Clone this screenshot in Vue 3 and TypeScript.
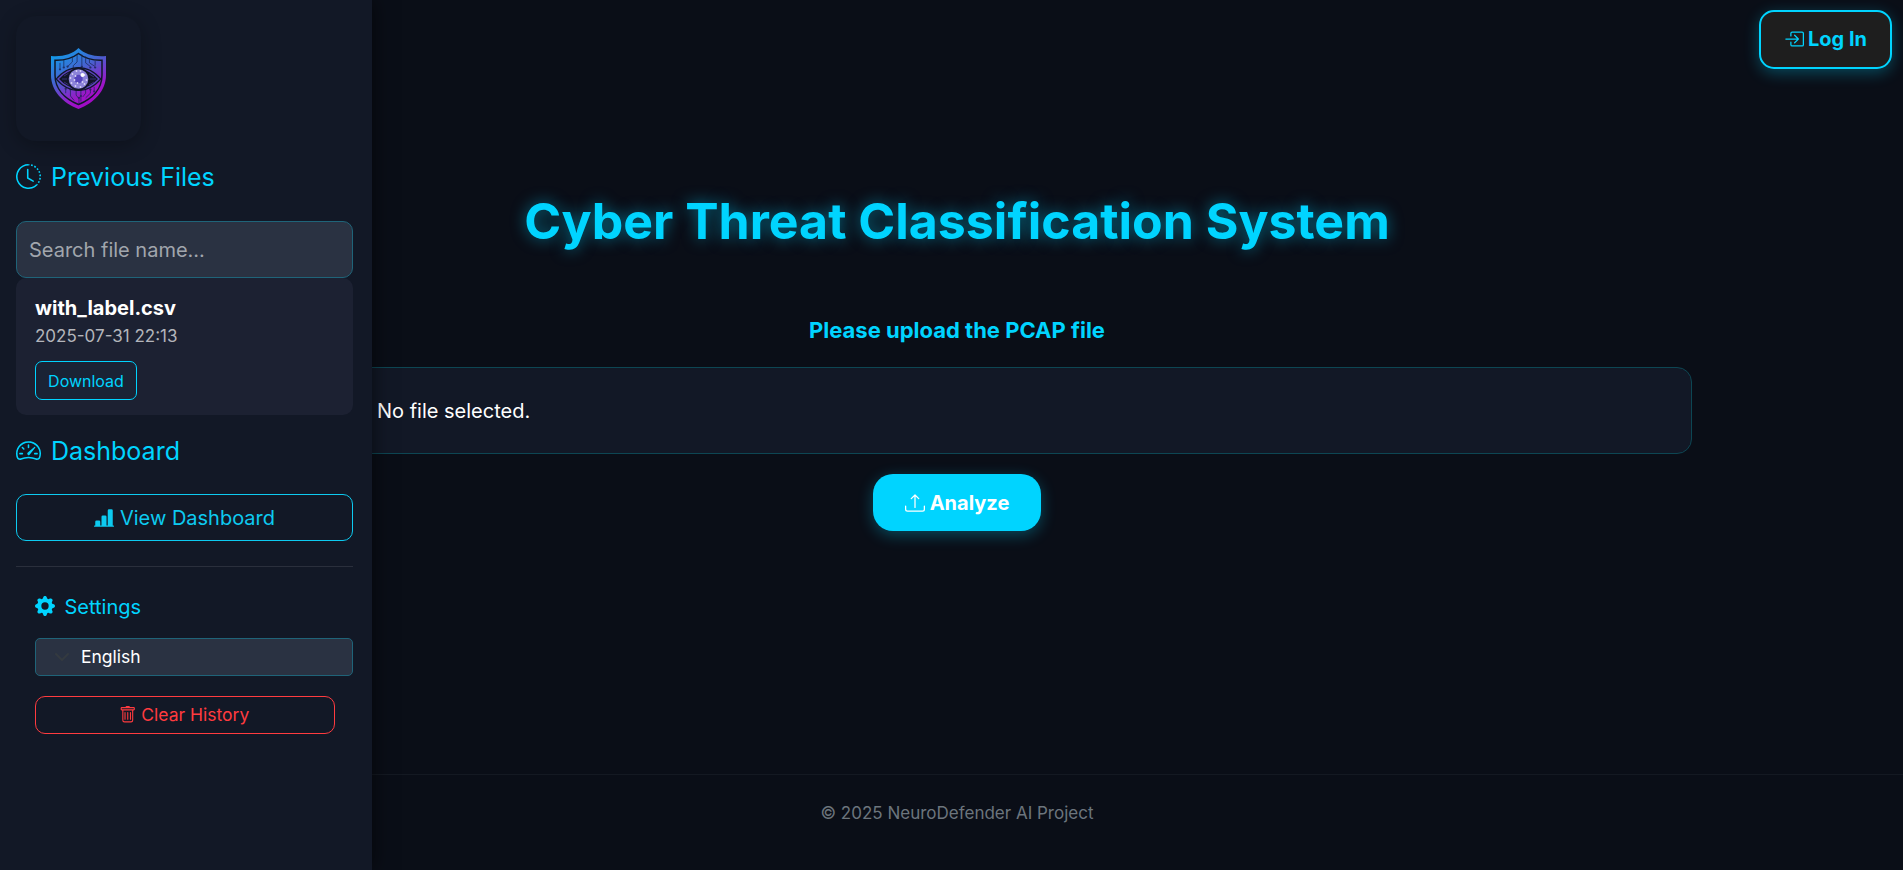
<script setup lang="ts">
import { ref } from 'vue'

interface StoredFile {
  name: string
  date: string
}

const search = ref('')
const files = ref<StoredFile[]>([{ name: 'with_label.csv', date: '2025-07-31 22:13' }])

const traces: string[] = [
  'M28 4v9l-4 4v5', 'M33 5v12', 'M23 7v6l-5 5', 'M37 7v7l5 4', 'M41 10v4l6 4', 'M14 11v8', 'M10 14v6', 'M47 12v5',
  'M21 44v6l4 5', 'M27 43v6l3 4v6', 'M32 43v13', 'M37 43v4l-3 4', 'M42 42v5l-5 5', 'M46 40v4', 'M16 41v6',
]
const nodes: number[][] = [
  [24, 22], [33, 18], [18, 18], [42, 19], [47, 19], [14, 19], [10, 21], [21, 43], [30, 52], [32, 50], [42, 43], [16, 42], [46, 45],
]
const sparkles: number[][] = [
  [24, 27], [28, 24], [32, 24], [36, 28], [38, 33], [36, 37], [32, 40], [27, 39], [23, 36], [22, 31], [27, 29], [34, 35], [29, 36], [26, 33],
]
</script>

<template>
  <div class="page">
    <aside class="sidebar">
      <div class="logo">
        <svg width="57" height="63" viewBox="0 0 57 63">
          <defs>
            <linearGradient id="shield" x1="0.1" y1="0" x2="0.65" y2="1">
              <stop offset="0" stop-color="#08a5ed" />
              <stop offset="0.45" stop-color="#4860cf" />
              <stop offset="0.8" stop-color="#9c16c8" />
              <stop offset="1" stop-color="#a306c4" />
            </linearGradient>
          </defs>
          <path fill="url(#shield)" d="M28.5 1C22 7.500 12 10 1 9v19c0 16 12 28 27.500 34C44 56 56 44 56 28V9C45 10 35 7.500 28.500 1Z" />
          <path fill="none" stroke="#101827" stroke-width="1.500" d="M28.5 6.500C22 11.500 14 13.500 5 13.200V28c0 14 10 24 23.500 29.500C42 52 52 42 52 28V13.200C43 13.500 35 11.500 28.500 6.500Z" />
          <g class="trace" transform="translate(0.5 3) scale(0.95 0.92)">
            <path v-for="d in traces" :key="d" :d="d" />
            <circle v-for="(n, i) in nodes" :key="i" :cx="n[0]" :cy="n[1]" r="1.200" />
          </g>
          <path fill="#111528" d="M5.500 32C18 16 39 16 51.500 32 39 48 18 48 5.500 32Z" />
          <path fill="none" stroke="#5a45be" stroke-width="1.400" d="M8 32C20 18.500 37 18.500 49 32 37 45.500 20 45.500 8 32Z" />
          <path fill="none" stroke="#353072" stroke-width="1" d="M12 32h8M14 29l5-3M14 35l5 3M38 32h8M39 27l5 3M39 38l5-3" />
          <circle cx="28.500" cy="32" r="11.500" fill="#111528" />
          <circle cx="28.500" cy="32" r="9.800" fill="#8c83d9" />
          <circle cx="28.500" cy="32" r="4.200" fill="#5544bd" />
          <g fill="#d9d3f5">
            <circle v-for="(s, i) in sparkles" :key="i" :cx="s[0] - 1.500" :cy="s[1]" r="0.900" />
          </g>
          <circle cx="32.500" cy="28" r="2" fill="#fff" />
        </svg>
      </div>

      <h5 class="heading">
        <svg class="icon" viewBox="0 0 16 16">
          <path d="M8.515 1.019A7 7 0 0 0 8 1V0a8 8 0 0 1 .589.022zm2.004.45a7 7 0 0 0-.985-.299l.219-.976q.576.129 1.126.342zm1.370.710a7 7 0 0 0-.439-.270l.493-.870a8 8 0 0 1 .979.654l-.615.789a7 7 0 0 0-.418-.302zm1.834 1.790a7 7 0 0 0-.653-.796l.724-.690q.406.429.747.910zm.744 1.352a7 7 0 0 0-.214-.468l.893-.450a8 8 0 0 1 .450 1.088l-.950.313a7 7 0 0 0-.179-.483m.530 2.507a7 7 0 0 0-.100-1.025l.985-.170q.100.580.116 1.170zm-.131 1.538q.050-.254.081-.510l.993.123a8 8 0 0 1-.230 1.155l-.964-.267q.069-.247.120-.501m-.952 2.379q.276-.436.486-.908l.914.405q-.240.540-.555 1.038zm-.964 1.205q.183-.183.350-.378l.758.653a8 8 0 0 1-.401.432z" />
          <path d="M8 1a7 7 0 1 0 4.950 11.950l.707.707A8.001 8.001 0 1 1 8 0z" />
          <path d="M7.500 3a.5.5 0 0 1 .5.5v5.210l3.248 1.856a.5.5 0 0 1-.496.868l-3.500-2A.5.5 0 0 1 7 9V3.500a.5.5 0 0 1 .5-.5" />
        </svg>
        <span>Previous Files</span>
      </h5>

      <input v-model="search" class="search" type="text" placeholder="Search file name..." />

      <div v-for="file in files" :key="file.name" class="file">
        <strong class="file-name">{{ file.name }}</strong>
        <span class="file-date">{{ file.date }}</span>
        <button class="download">Download</button>
      </div>

      <h5 class="heading dash-heading">
        <svg class="icon" viewBox="0 0 16 16">
          <path d="M8 4a.5.5 0 0 1 .5.5V6a.5.5 0 0 1-1 0V4.500A.5.5 0 0 1 8 4M3.732 5.732a.5.5 0 0 1 .707 0l.915.914a.5.5 0 1 1-.708.708l-.914-.915a.5.5 0 0 1 0-.707M2 10a.5.5 0 0 1 .5-.5h1.586a.5.5 0 0 1 0 1H2.500A.5.5 0 0 1 2 10m9.500 0a.5.5 0 0 1 .5-.5h1.500a.5.5 0 0 1 0 1H12a.5.5 0 0 1-.5-.5m.754-4.246a.39.39 0 0 0-.527-.020L7.547 9.310a.91.91 0 1 0 1.302 1.258l3.434-4.297a.39.39 0 0 0-.029-.518z" />
          <path fill-rule="evenodd" d="M0 10a8 8 0 1 1 15.547 2.661c-.442 1.253-1.845 1.602-2.932 1.250C11.309 13.488 9.475 13 8 13c-1.474 0-3.310.488-4.615.911-1.087.352-2.490.003-2.932-1.250A8 8 0 0 1 0 10m8-7a7 7 0 0 0-6.603 9.329c.203.575.923.876 1.680.630C4.397 12.533 6.358 12 8 12s3.604.532 4.923.960c.757.245 1.477-.056 1.680-.631A7 7 0 0 0 8 3" />
        </svg>
        <span>Dashboard</span>
      </h5>

      <button class="view">
        <svg class="icon" viewBox="0 0 16 16">
          <path d="M11 2a1 1 0 0 1 1-1h2a1 1 0 0 1 1 1v12h.5a.5.5 0 0 1 0 1H.5a.5.5 0 0 1 0-1H1v-3a1 1 0 0 1 1-1h2a1 1 0 0 1 1 1v3h1V7a1 1 0 0 1 1-1h2a1 1 0 0 1 1 1v7h1z" />
        </svg>
        <span>View Dashboard</span>
      </button>

      <div class="divider"></div>

      <section class="settings">
        <h6 class="settings-title">
          <svg class="icon" viewBox="0 0 16 16">
            <path d="M9.405 1.050c-.413-1.400-2.397-1.400-2.810 0l-.100.340a1.464 1.464 0 0 1-2.105.872l-.310-.170c-1.283-.698-2.686.705-1.987 1.987l.169.311c.446.820.023 1.841-.872 2.105l-.340.100c-1.400.413-1.400 2.397 0 2.810l.340.100a1.464 1.464 0 0 1 .872 2.105l-.170.310c-.698 1.283.705 2.686 1.987 1.987l.311-.169a1.464 1.464 0 0 1 2.105.872l.100.340c.413 1.400 2.397 1.400 2.810 0l.100-.340a1.464 1.464 0 0 1 2.105-.872l.310.170c1.283.698 2.686-.705 1.987-1.987l-.169-.311a1.464 1.464 0 0 1 .872-2.105l.340-.100c1.400-.413 1.400-2.397 0-2.810l-.340-.100a1.464 1.464 0 0 1-.872-2.105l.170-.310c.698-1.283-.705-2.686-1.987-1.987l-.311.169a1.464 1.464 0 0 1-2.105-.872zM8 10.930a2.929 2.929 0 1 1 0-5.860 2.929 2.929 0 0 1 0 5.858z" />
          </svg>
          <span>Settings</span>
        </h6>
        <div class="language">
          <svg class="chevron" viewBox="0 0 16 16"><path d="m2 5 6 6 6-6" /></svg>
          <span>English</span>
        </div>
        <button class="clear">
          <svg class="icon" viewBox="0 0 16 16">
            <path d="M5.500 5.500A.5.5 0 0 1 6 6v6a.5.5 0 0 1-1 0V6a.5.5 0 0 1 .5-.5m2.500 0a.5.5 0 0 1 .5.5v6a.5.5 0 0 1-1 0V6a.5.5 0 0 1 .5-.5m3 .5a.5.5 0 0 0-1 0v6a.5.5 0 0 0 1 0z" />
            <path d="M14.500 3a1 1 0 0 1-1 1H13v9a2 2 0 0 1-2 2H5a2 2 0 0 1-2-2V4h-.5a1 1 0 0 1-1-1V2a1 1 0 0 1 1-1H6a1 1 0 0 1 1-1h2a1 1 0 0 1 1 1h3.500a1 1 0 0 1 1 1zM4.118 4 4 4.059V13a1 1 0 0 0 1 1h6a1 1 0 0 0 1-1V4.059L11.882 4zM2.500 3h11V2h-11z" />
          </svg>
          <span>Clear History</span>
        </button>
      </section>
    </aside>

    <header class="topbar">
      <button class="login">
        <svg class="icon" viewBox="0 0 16 16">
          <path d="M6 3.500a.5.5 0 0 1 .5-.5h8a.5.5 0 0 1 .5.5v9a.5.5 0 0 1-.5.5h-8a.5.5 0 0 1-.5-.5v-2a.5.5 0 0 0-1 0v2A1.500 1.500 0 0 0 6.500 14h8a1.500 1.500 0 0 0 1.500-1.500v-9A1.500 1.500 0 0 0 14.500 2h-8A1.500 1.500 0 0 0 5 3.500v2a.5.5 0 0 0 1 0z" />
          <path d="M11.854 8.354a.5.5 0 0 0 0-.708l-3-3a.5.5 0 1 0-.708.708L10.293 7.500H1.500a.5.5 0 0 0 0 1h8.793l-2.147 2.146a.5.5 0 0 0 .708.708z" />
        </svg>
        <span>Log In</span>
      </button>
    </header>

    <main class="main">
      <h1 class="title">Cyber Threat Classification System</h1>
      <label class="prompt">Please upload the PCAP file</label>
      <div class="picker">No file selected.</div>
      <button class="analyze">
        <svg class="icon" viewBox="0 0 16 16">
          <path d="M.5 9.900a.5.5 0 0 1 .5.5v2.500a1 1 0 0 0 1 1h12a1 1 0 0 0 1-1v-2.500a.5.5 0 0 1 1 0v2.500a2 2 0 0 1-2 2H2a2 2 0 0 1-2-2v-2.500a.5.5 0 0 1 .5-.5" />
          <path d="M7.646 1.146a.5.5 0 0 1 .708 0l3 3a.5.5 0 0 1-.708.708L8.500 2.707V11.500a.5.5 0 0 1-1 0V2.707L5.354 4.854a.5.5 0 1 1-.708-.708z" />
        </svg>
        <span>Analyze</span>
      </button>
    </main>

    <footer class="footer">© 2025 NeuroDefender AI Project</footer>
  </div>
</template>

<style>
body {
  background: #0a0e17;
  overflow: hidden;
}
</style>

<style scoped>
.page,
.page * {
  box-sizing: border-box;
}

.page {
  height: 870px;
  display: flex;
  flex-direction: column;
  background: #0a0e17;
  color: #fff;
  font-family: Inter, 'Liberation Sans', sans-serif;
  font-size: 20px;
  line-height: 30px;
}

button,
input {
  font: inherit;
  margin: 0;
}

.icon {
  width: 1em;
  height: 1em;
  flex: none;
  fill: currentColor;
}

.sidebar {
  position: absolute;
  z-index: 2;
  left: 0;
  top: 0;
  width: 372px;
  height: 870px;
  padding: 16px 19px 16px 16px;
  background: #121826;
  box-shadow: 0 0 20px rgba(0, 0, 0, 0.6);
  display: flex;
  flex-direction: column;
}

.logo {
  width: 125px;
  height: 125px;
  flex: none;
  display: flex;
  align-items: center;
  justify-content: center;
  border-radius: 20px;
  box-shadow: 0 4px 20px rgba(0, 0, 0, 0.3);
}

.trace {
  fill: #17234f;
  opacity: 0.8;
}

.trace path {
  fill: none;
  stroke: #17234f;
  stroke-width: 0.9;
}

.heading {
  display: flex;
  align-items: center;
  gap: 10px;
  margin: 21px 0 0;
  height: 30px;
  font-size: 25px;
  font-weight: 400;
  color: #00d4ff;
}

.heading .icon,
.settings-title .icon {
  margin-bottom: 2px;
}

.search {
  width: 337px;
  height: 57px;
  margin-top: 29px;
  padding: 1px 12px 0;
  flex: none;
  border: 1px solid #1f6479;
  border-radius: 10px;
  background: #2a3242;
  color: #fff;
  outline: none;
}

.search::placeholder {
  color: #a1a6ad;
  opacity: 1;
}

.file {
  height: 137px;
  padding: 15px 19px;
  display: flex;
  flex-direction: column;
  align-items: flex-start;
  border-radius: 10px;
  background: #1c2132;
}

.file-name {
  font-weight: 700;
  line-height: 30px;
}

.file-date {
  font-size: 17px;
  line-height: 26px;
  color: #b3b5bb;
}

.download {
  width: 102px;
  height: 39px;
  margin-top: 12px;
  padding: 0;
  border: 1px solid #00d4ff;
  border-radius: 7px;
  background: #1a2335;
  color: #00d4ff;
  font-size: 16px;
  line-height: 24px;
}

.dash-heading {
  margin-top: 21px;
}

.view {
  height: 47px;
  margin-top: 28px;
  display: flex;
  align-items: center;
  justify-content: center;
  gap: 6px;
  border: 1px solid #0dcaf0;
  border-radius: 10px;
  background: transparent;
  color: #0dcaf0;
}

.divider {
  height: 1px;
  margin-top: 25px;
  background: #2a2f3c;
}

.settings {
  margin-top: 25px;
  padding-left: 19px;
}

.settings-title {
  display: flex;
  align-items: center;
  gap: 10px;
  height: 30px;
  margin: 0 0 0 -0.5px;
  font-size: 20px;
  font-weight: 400;
  color: #00d4ff;
}

.language {
  height: 38px;
  margin-top: 16px;
  padding-left: 18px;
  display: flex;
  align-items: center;
  gap: 11px;
  border: 1px solid #1f6479;
  border-radius: 5px;
  background: #2a3242;
  font-size: 17.5px;
}

.chevron {
  width: 16px;
  height: 16px;
  fill: none;
  stroke: #343a40;
  stroke-width: 2;
  stroke-linecap: round;
  stroke-linejoin: round;
}

.clear {
  width: 300px;
  height: 38px;
  margin-top: 20px;
  padding: 0 2px 0 0;
  display: flex;
  align-items: center;
  justify-content: center;
  gap: 5px;
  border: 1px solid #ff3b3f;
  border-radius: 10px;
  background: transparent;
  color: #ff3b3f;
  font-size: 17.5px;
}

.topbar {
  height: 69px;
  padding: 10px 11px 0 0;
  flex: none;
  display: flex;
  justify-content: flex-end;
}

.login {
  width: 133px;
  height: 59px;
  padding: 0 0 2px;
  display: flex;
  align-items: center;
  justify-content: center;
  gap: 4px;
  border: 2px solid #00d4ff;
  border-radius: 15px;
  background: #1e1e1e;
  box-shadow: 0 4px 15px rgba(0, 212, 255, 0.3);
  color: #00d4ff;
  font-weight: 700;
}

.main {
  height: 705px;
  padding-left: 11px;
  display: flex;
  flex-direction: column;
  align-items: center;
}

.title {
  margin: 122px 0 0;
  font-size: 50px;
  line-height: 60px;
  font-weight: 700;
  text-shadow: 0 0 15px rgba(0, 212, 255, 0.5);
  color: #00d4ff;
}

.prompt {
  margin-top: 64px;
  font-size: 22px;
  font-weight: 700;
  color: #00d4ff;
}

.picker {
  width: 1470px;
  height: 87px;
  margin-top: 22px;
  padding: 0 154px;
  display: flex;
  align-items: center;
  border: 1px solid #0d4653;
  border-radius: 15px;
  background: #121826;
}

.analyze {
  width: 168px;
  height: 57px;
  margin-top: 20px;
  padding: 0;
  display: flex;
  align-items: center;
  justify-content: center;
  gap: 5px;
  border: 0;
  border-radius: 20px;
  background: #00d4ff;
  box-shadow: 0 4px 15px rgba(0, 212, 255, 0.3);
  color: #fff;
  font-weight: 700;
}

.footer {
  height: 96px;
  padding: 25px 0 0 11px;
  border-top: 1px solid #141922;
  color: #6c757d;
  font-size: 17px;
  line-height: 26px;
  text-align: center;
}
</style>
